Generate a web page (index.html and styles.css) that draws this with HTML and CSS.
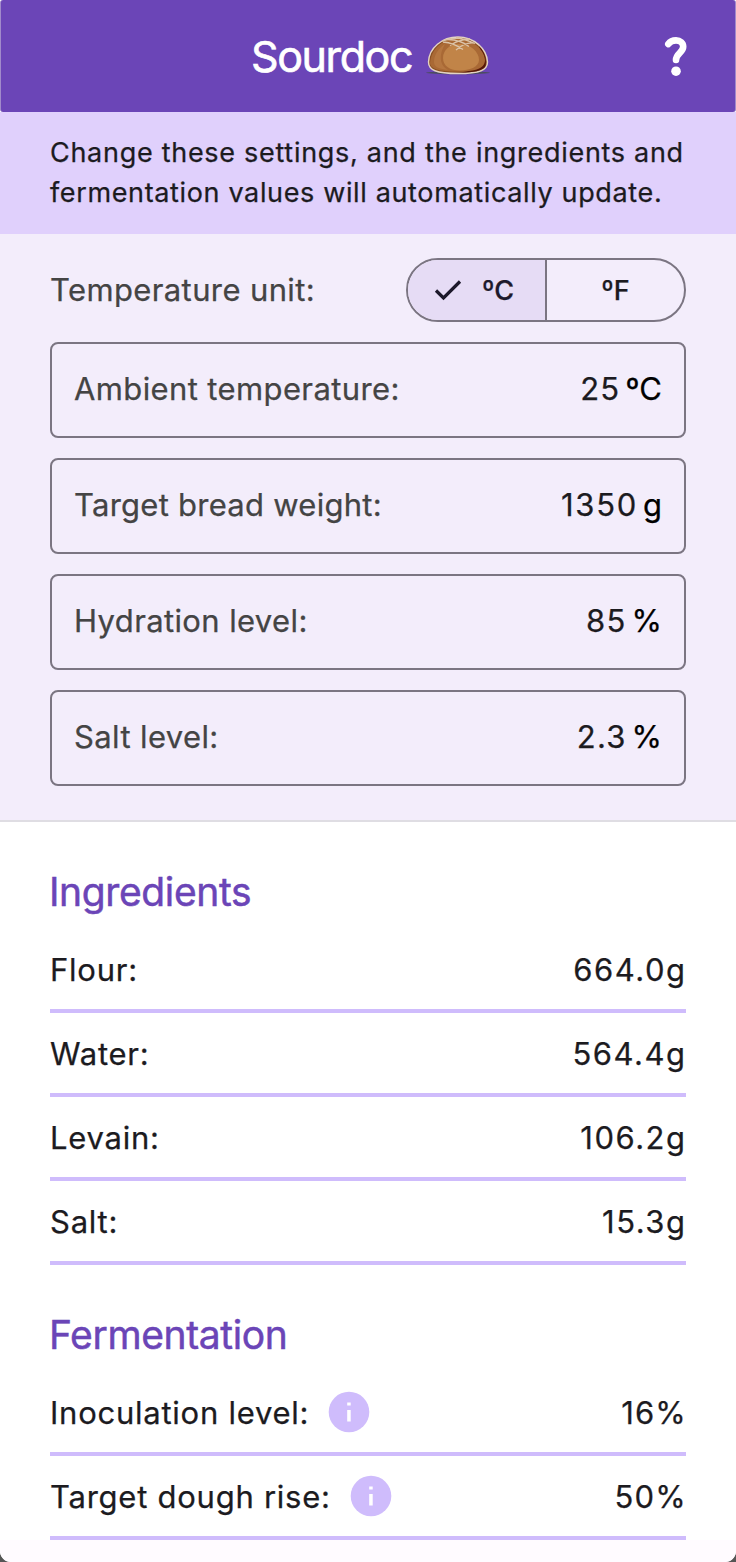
FILE: index.html
```html
<!DOCTYPE html>
<html lang="en">
<head>
<meta charset="utf-8">
<title>Sourdoc</title>
<link rel="stylesheet" href="styles.css">
</head>
<body>
<div class="app">
  <header class="bar">
    <h1 class="title">Sourdoc</h1>
    <svg class="bread" width="66" height="42" viewBox="0 0 66 42">
      <ellipse cx="33" cy="37.800" rx="32" ry="1.500" fill="#4b4c62"/>
      <path d="M3.500 27C4 13 17 2 33 2C49 2 62 14 62.500 27C62.500 35 55 38.500 33 38.500C11 38.500 3.500 35 3.500 27Z" fill="#8a4f20" stroke="#e3d3c4" stroke-width="1.400"/>
      <path d="M54 11C61 18 62 28 60 32C55 37.500 43 37.500 33 37.500C48 36.500 61 33 54 11Z" fill="#551708"/>
      <path d="M5 28C6 14 18 3.500 32 3.500C47 3.500 59 14 60 25C60 35 47 36.500 33 36.500C14 36.500 5 34 5 28Z" fill="#a96935"/>
      <path d="M9 27C9 19 15 12 20 9C15 18 13 29 23 35C14 34 9 32 9 27Z" fill="#b57640"/>
      <path d="M18 23C18 15 25 9 34 9C46 9 54 17 54 25C54 32 44 35.500 35 35.500C25 35.500 18 31 18 23Z" fill="#c18448"/>
      <path d="M18 7Q29 8 38 14.500M23 4.500Q36 5 44 11.500M49 8Q40 7 31 15M45 4Q35 4 25 10.500M17 6Q26 3 37 3M31 2.500Q41 4 50 8.500" fill="none" stroke="#dbc3a8" stroke-width="1.300"/>
    </svg>
    <svg class="help" width="24" height="40" viewBox="0 0 24 40">
      <path d="M4.300 8C6.300 5.300 9 4.400 12 4.400C16.300 4.400 19.200 7.100 19.200 10.700C19.200 16.500 12 17.200 12 24" fill="none" stroke="#fff" stroke-width="6.600" stroke-linecap="round" stroke-linejoin="round"/>
      <circle cx="12" cy="35.200" r="4.800" fill="#fff"/>
    </svg>
  </header>
  <p class="hint">Change these settings, and the ingredients and<br><span class="hint-end">fermentation values will automatically update.</span></p>
  <section class="settings">
    <div class="unit-row">
      <span class="label">Temperature unit:</span>
      <div class="segments">
        <div class="segment selected">
          <svg class="check" width="28" height="22" viewBox="0 0 28 22"><path d="M2 11.500L9.500 19L26 2.500" fill="none" stroke="#1d192b" stroke-width="3.200"/></svg>
          <span>ºC</span>
        </div>
        <div class="segment"><span>ºF</span></div>
      </div>
    </div>
    <div class="field"><span class="label">Ambient temperature:</span><span class="value"><span>25</span><span class="suffix">ºC</span></span></div>
    <div class="field"><span class="label tight">Target bread weight:</span><span class="value wide"><span>1350</span><span class="suffix">g</span></span></div>
    <div class="field"><span class="label">Hydration level:</span><span class="value"><span>85</span><span class="suffix">%</span></span></div>
    <div class="field"><span class="label">Salt level:</span><span class="value"><span>2.3</span><span class="suffix">%</span></span></div>
  </section>
  <main class="results">
    <h2 class="heading">Ingredients</h2>
    <div class="row"><span>Flour:</span><span class="amount">664.0g</span></div>
    <div class="row"><span>Water:</span><span class="amount">564.4g</span></div>
    <div class="row"><span>Levain:</span><span class="amount">106.2g</span></div>
    <div class="row"><span>Salt:</span><span class="amount">15.3g</span></div>
    <h2 class="heading second">Fermentation</h2>
    <div class="row"><span class="with-info">Inoculation level:<svg class="info" width="42" height="42" viewBox="0 0 42 42"><circle cx="21" cy="21" r="20.300" fill="#cfbcfc"/><path d="M19.200 11.500h3.500v3h-3.500zM19.200 19h3.500v11.500h-3.500z" fill="#fff"/></svg></span><span class="percent">16%</span></div>
    <div class="row"><span class="with-info">Target dough rise:<svg class="info" width="42" height="42" viewBox="0 0 42 42"><circle cx="21" cy="21" r="20.300" fill="#cfbcfc"/><path d="M19.200 11.500h3.500v3h-3.500zM19.200 19h3.500v11.500h-3.500z" fill="#fff"/></svg></span><span class="percent">50%</span></div>
  </main>
  <div class="footer"></div>
</div>
</body>
</html>
```
FILE: styles.css
```css
* { box-sizing: border-box; }
html { background: #555; }
body { margin: 0; font-family: Inter, sans-serif; color: #1c1b1f; }
.app { width: 736px; height: 1562px; background: #fff; border-radius: 0 0 11px 11px; overflow: hidden; display: flex; flex-direction: column; -webkit-text-stroke: 0.25px; }
.bar { height: 112px; flex: none; background: #6b45b7; border: solid #a18acb; border-width: 0 1px; border-radius: 3px; display: grid; grid-template-columns: 250px 174px 1fr 24px; align-items: center; padding-right: 47px; color: #fff; }
.title { grid-column: 2; margin: 0; font-size: 43px; line-height: 56px; font-weight: 400; letter-spacing: -1.4px; -webkit-text-stroke: 0.6px; }
.bread { grid-column: 3; }
.help { grid-column: 4; }
.hint { height: 122px; flex: none; margin: 0; padding: 21px 50px 0; background: #e0d0fc; font-size: 27px; line-height: 40px; letter-spacing: 0.71px; white-space: nowrap; }
.hint-end { letter-spacing: 0.64px; }
.settings { height: 588px; flex: none; background: #f3edfb; border-bottom: 2px solid #dfdde3; padding: 24px 50px 0; display: flex; flex-direction: column; gap: 20px; }
.unit-row { height: 64px; display: flex; align-items: center; justify-content: space-between; }
.label { color: #444; }
.unit-row .label, .field, .row { font-size: 31px; line-height: 40px; letter-spacing: 0.38px; white-space: nowrap; }
.field .tight { letter-spacing: 0.26px; }
.segments { width: 280px; height: 64px; border: 2px solid #7b7582; border-radius: 32px; overflow: hidden; display: grid; grid-template-columns: 139px 1fr; color: #1c1b1f; font-size: 27px; font-weight: 500; }
.segment { display: flex; align-items: center; justify-content: center; gap: 20px; }
.selected { background: #e6dcf5; border-right: 2px solid #7b7582; color: #1d192b; padding-right: 5px; }
.field { height: 96px; border: 2px solid #7b7582; border-radius: 8px; padding: 0 22px 2px; display: flex; justify-content: space-between; align-items: center; }
.value { display: flex; gap: 5px; letter-spacing: 1.2px; }
.wide { letter-spacing: 1.7px; }
.suffix { color: #000; letter-spacing: 0; }
.results { padding: 48px 50px 0; }
.heading { margin: 0 0 15px -1px; font-size: 39px; line-height: 44px; font-weight: 400; color: #6b45b7; letter-spacing: -0.37px; -webkit-text-stroke: 0.5px; }
.second { margin-top: 48px; }
.row { height: 84px; padding-top: 2px; border-bottom: 4px solid #cfbcfc; display: flex; align-items: center; justify-content: space-between; letter-spacing: 0.75px; }
.amount { letter-spacing: 1.5px; margin-right: -0.5px; }
.percent { letter-spacing: 1.2px; margin-right: -1px; }
.with-info { display: flex; align-items: center; gap: 19px; }
.info { margin-bottom: 3px; }
.footer { margin-top: auto; height: 22px; background: #fffbff; }
```
